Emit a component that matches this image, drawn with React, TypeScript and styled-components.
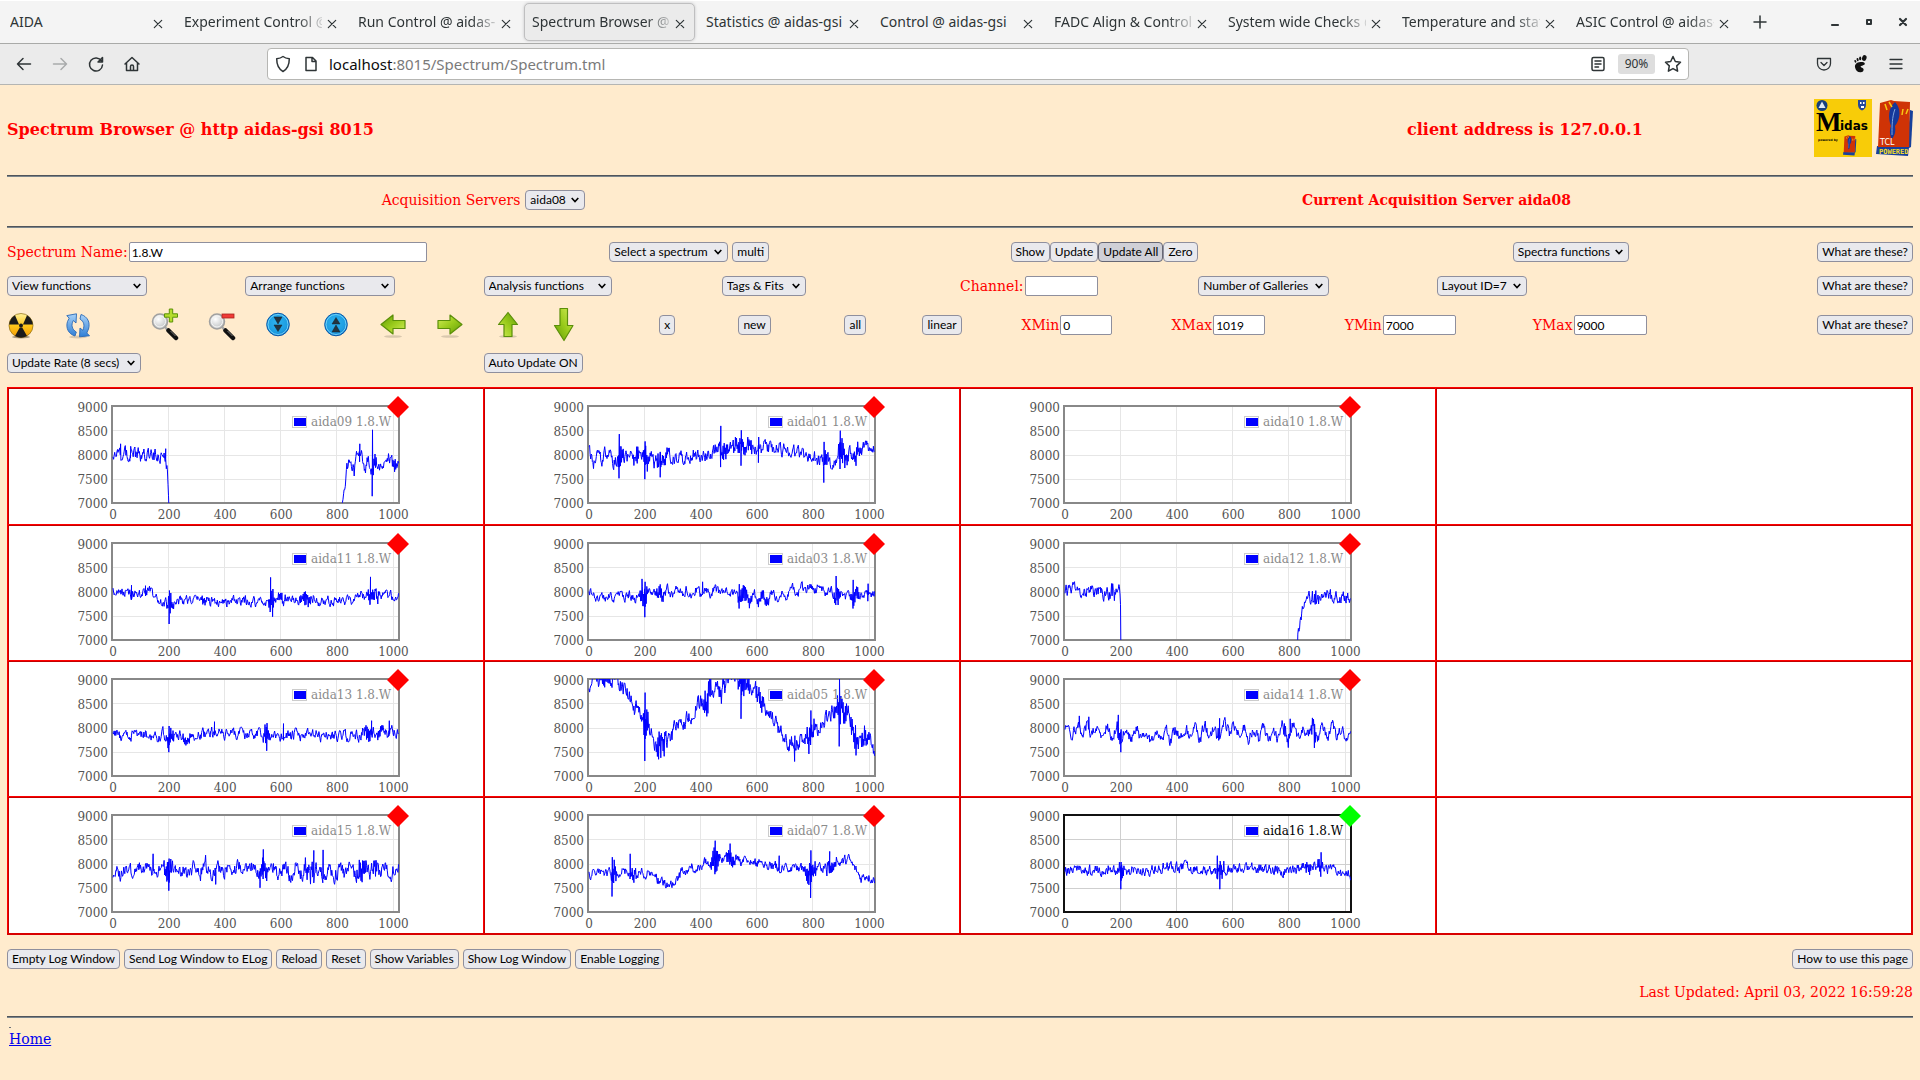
import React from "react";
import styled, { createGlobalStyle } from "styled-components";

const UI_FONT = `"Noto Sans", "Open Sans", sans-serif`;
const CONTROL_FONT = `Lato, "Noto Sans", sans-serif`;
const PAGE_FONT = `"DejaVu Serif", serif`;

const GlobalStyle = createGlobalStyle`
  *, *::before, *::after { box-sizing: border-box; }
  body { margin: 0; background: #ffebcd; }
  #root { min-height: 100vh; }
`;

/* ---------- browser chrome ---------- */

const Chrome = styled.header`
  font-family: ${UI_FONT};
  color: #2e3436;
`;

const TabBar = styled.div`
  display: flex;
  align-items: center;
  gap: 3px;
  height: 44px;
  padding-left: 2px;
  background: #f4f4f4;
  border-top: 1px solid #fff;
  border-bottom: 1px solid #a9aaa8;
`;

const Tab = styled.div<{ $active?: boolean }>`
  display: flex;
  align-items: center;
  flex: 0 1 171px;
  min-width: 0;
  height: 38px;
  padding: 0 8px 0 7px;
  border: 1px solid ${(p) => (p.$active ? "#bfbfc0" : "transparent")};
  border-radius: 5px;
  background: ${(p) => (p.$active ? "#ebebeb" : "transparent")};
  box-shadow: ${(p) => (p.$active ? "0 0 3px #c4c4c6" : "none")};
`;

const TabTitle = styled.button<{ $faded?: boolean }>`
  flex: 1;
  min-width: 0;
  overflow: hidden;
  padding: 0;
  border: 0;
  background: none;
  color: inherit;
  font: 14px/20px ${UI_FONT};
  text-align: left;
  white-space: nowrap;
  mask-image: ${(p) => (p.$faded ? "linear-gradient(to right, #000 82%, transparent 104%)" : "none")};
`;

const IconButton = styled.button<{ $size?: number; $dim?: boolean }>`
  display: grid;
  place-items: center;
  flex: none;
  width: ${(p) => p.$size ?? 36}px;
  height: ${(p) => p.$size ?? 36}px;
  padding: 0;
  border: 0;
  background: none;
  color: inherit;
  opacity: ${(p) => (p.$dim ? 0.35 : 1)};
`;

const ToolButton = styled(IconButton)`
  width: 28px;
  height: 36px;
`;

const NewTab = styled(IconButton)`
  margin-left: 4px;
`;

const WindowControls = styled.div`
  display: flex;
  margin-left: auto;
`;

const ToolBar = styled.div`
  display: flex;
  align-items: center;
  height: 41px;
  background: #ebebeb;
  border-bottom: 1px solid #b4b5b3;
`;

const NavGroup = styled.nav`
  display: flex;
  width: 267px;
  padding-left: 6px;
`;

const AddressBar = styled.div`
  display: flex;
  align-items: center;
  flex: 1;
  height: 32px;
  padding: 0 3px;
  background: #fff;
  border: 1px solid #b6b6b3;
  border-radius: 4px;
`;

const Url = styled.div`
  flex: 1;
  padding-left: 2px;
  color: #7a7a7a;
  font: 15px/20px ${UI_FONT};
  b { color: #0c0c0d; font-weight: 400; }
`;

const ZoomBadge = styled.button`
  width: 37px;
  height: 20px;
  margin: 0 6px;
  padding: 0;
  border: 0;
  border-radius: 3px;
  background: #dedede;
  color: #2e3436;
  font: 12px/20px ${UI_FONT};
`;

const ExtraGroup = styled.div`
  display: flex;
  justify-content: flex-end;
  width: 231px;
  padding-right: 6px;
`;

/* ---------- page ---------- */

const Page = styled.main`
  padding: 0 7px;
  color: #f00;
  font: 14px/18px ${PAGE_FONT};
`;

const Rule = styled.hr`
  height: 2px;
  margin: 0;
  border: 0;
  border-top: 1px solid #50545a;
  border-bottom: 1px solid #7b858c;
`;

const Banner = styled.div`
  display: grid;
  grid-template-columns: 68fr 32fr auto;
  align-items: center;
  height: 90px;
`;

const Title = styled.h3`
  margin: 0;
  font-size: 16px;
  line-height: 22px;
`;

const ClientCell = styled.div`
  text-align: center;
`;

const Logos = styled.div`
  display: flex;
  gap: 4px;
  margin-bottom: 4px;
`;

const Servers = styled.div`
  display: grid;
  grid-template-columns: 1fr 1fr;
  align-items: center;
  justify-items: center;
  height: 49px;
  padding-bottom: 3px;
`;

const Controls = styled.div`
  display: grid;
  padding: 7px 0 8px;
`;

const Row = styled.div<{ $cols: string; $height: number }>`
  display: grid;
  grid-template-columns: ${(p) => p.$cols};
  align-items: center;
  height: ${(p) => p.$height}px;
`;

const Cell = styled.div<{ $end?: boolean; $gap?: number }>`
  display: flex;
  align-items: center;
  justify-content: ${(p) => (p.$end ? "flex-end" : "flex-start")};
  gap: ${(p) => p.$gap ?? 0}px;
  white-space: nowrap;
`;

const PushRight = styled.span`
  display: flex;
  margin-left: auto;
`;

const PushButton = styled.button<{ $active?: boolean }>`
  flex: none;
  height: 20px;
  padding: 0 4px;
  border: 1px solid ${(p) => (p.$active ? "#676774" : "#8f8f9d")};
  border-radius: 4px;
  background: ${(p) => (p.$active ? "#d0d0d7" : "#e9e9ed")};
  color: #000;
  font: 12px/18px ${CONTROL_FONT};
  white-space: nowrap;
`;

const SelectBox = styled.span<{ $width: number }>`
  display: inline-grid;
  align-items: center;
  flex: none;
  width: ${(p) => p.$width}px;
  > * { grid-area: 1 / 1; }
  > svg { justify-self: end; margin-right: 5px; pointer-events: none; }
`;

const SelectField = styled.select`
  appearance: none;
  width: 100%;
  height: 20px;
  padding: 0 4px;
  border: 1px solid #8f8f9d;
  border-radius: 4px;
  background: #e9e9ed;
  color: #000;
  font: 12px/18px ${CONTROL_FONT};
`;

const Label = styled.label`
  font: 14px/18px ${PAGE_FONT};
`;

const TextField = styled.input<{ $width: number }>`
  width: ${(p) => p.$width}px;
  height: 20px;
  padding: 0 2px;
  border: 1px solid #8f8f9d;
  border-radius: 2px;
  background: #fff;
  color: #000;
  font: 12px/18px ${CONTROL_FONT};
`;

const Gallery = styled.section`
  display: grid;
  grid-template-columns: repeat(4, 1fr);
  grid-template-rows: 137px 136px 136px 137px;
  background: #fff;
  border-right: 2px solid #e00000;
  border-bottom: 2px solid #d80000;
`;

const Panel = styled.div`
  overflow: hidden;
  border-top: 1px solid #f00;
  border-left: 1px solid #f00;
  box-shadow: inset 1px 1px 0 #c40000;
`;

const Plot = styled.svg`
  display: block;
  margin: -1px 0 0 -1px;
  font: 12px ${PAGE_FONT};
  fill: #545454;
`;

const LogBar = styled.div`
  display: flex;
  align-items: center;
  gap: 4px;
  padding-top: 14px;
  > :last-child { margin-left: auto; }
`;

const Updated = styled.p`
  margin: 14px 0 15px;
  text-align: right;
`;

const Footer = styled.footer`
  padding: 5px 2px 0;
  a { color: #00e; }
`;

const Dot = styled.span`
  display: block;
  width: 2px;
  height: 1px;
  margin: 4px 0 2px;
  background: #6b7079;
`;

/* ---------- small icons ---------- */

const Line = ({ size = 20, children, w = 1.5 }: { size?: number; w?: number; children: React.ReactNode }) => (
  <svg width={size} height={size} viewBox="0 0 20 20" fill="none" stroke="currentColor" strokeWidth={w} strokeLinecap="round" strokeLinejoin="round" aria-hidden="true">
    {children}
  </svg>
);

const CloseIcon = () => <Line size={20} w={1.2}><path d="M6.3 6.3l7.4 7.4M13.7 6.3l-7.4 7.4" /></Line>;

const FootIcon = () => (
  <svg width="18" height="20" viewBox="0 0 18 20" fill="#111" aria-hidden="true">
    <ellipse cx="13.3" cy="4" rx="2.2" ry="3" transform="rotate(18 13.3 4)" />
    <ellipse cx="9.2" cy="4.4" rx="1.1" ry="1.9" />
    <ellipse cx="6.6" cy="5.6" rx="1" ry="1.6" transform="rotate(-12 6.6 5.6)" />
    <ellipse cx="4.4" cy="7.3" rx=".9" ry="1.4" transform="rotate(-25 4.4 7.3)" />
    <path d="M9.5 8C5.5 8.200 3.600 10.500 4 13.300 4.500 16.800 7.200 18.600 10 18.200c2.500-.4 3.400-2.700 1.900-4-1-.9-2.200-.6-2.300-1.700-.1-1 4.600-1 4.200-3C13.500 8.200 11.500 7.900 9.500 8z" />
  </svg>
);

const Chevron = () => (
  <svg width="10" height="8" viewBox="0 0 10 8" fill="none" stroke="#000" strokeWidth="1.6" aria-hidden="true">
    <path d="M1.700 2L5 5.600 8.300 2" />
  </svg>
);

/* ---------- toolbar pictures ---------- */

const Pic = ({ children }: { children: React.ReactNode }) => (
  <svg width="28" height="36" viewBox="0 0 28 36" aria-hidden="true">{children}</svg>
);

const HiddenSvg = styled.svg`
  position: absolute;
`;

const PicDefs = () => (
  <HiddenSvg width="0" height="0" aria-hidden="true">
    <defs>
      <linearGradient id="green" x1="0" y1="0" x2="1" y2="1">
        <stop offset="0" stopColor="#d4ee5a" /><stop offset=".5" stopColor="#9acb1c" /><stop offset="1" stopColor="#5f9c06" />
      </linearGradient>
      <radialGradient id="blue" cx=".45" cy=".4" r=".65">
        <stop offset="0" stopColor="#2fb2ee" /><stop offset=".7" stopColor="#1c9de2" /><stop offset="1" stopColor="#0b62b8" />
      </radialGradient>
      <linearGradient id="sky" x1="0" y1="0" x2="0" y2="1">
        <stop offset="0" stopColor="#a9d2f8" /><stop offset="1" stopColor="#2f7fd6" />
      </linearGradient>
      <linearGradient id="amber" x1="0" y1="0" x2="0" y2="1">
        <stop offset="0" stopColor="#fff09a" /><stop offset=".5" stopColor="#ffc61a" /><stop offset="1" stopColor="#f29a05" />
      </linearGradient>
      <radialGradient id="glass" cx=".4" cy=".35" r=".7">
        <stop offset="0" stopColor="#fff" /><stop offset="1" stopColor="#b9bcbe" />
      </radialGradient>
    </defs>
  </HiddenSvg>
);

const NukePic = () => (
  <Pic>
    <ellipse cx="14" cy="30" rx="9" ry="1.500" fill="#000" opacity=".35" />
    <circle cx="14" cy="18.500" r="12" fill="url(#amber)" stroke="#8a6a10" strokeWidth=".7" />
    <g fill="#1b1b1b">
      <path d="M12 17.500L2.200 17.500A12 12 0 0 1 8 8.200z" />
      <path d="M16 17.500L25.800 17.500A12 12 0 0 0 20 8.200z" />
      <path d="M12.800 20.600L8 28.900A12 12 0 0 0 20 28.900L15.200 20.600z" />
      <circle cx="14" cy="18.500" r="2" />
    </g>
  </Pic>
);

const RefreshPic = () => (
  <Pic>
    <ellipse cx="14" cy="30" rx="9" ry="1.500" fill="#000" opacity=".15" />
    <g fill="url(#sky)" stroke="#2a69b5" strokeWidth=".9" strokeLinejoin="round">
      <path d="M11 29C4.500 27 1.500 21 3.500 14.500L5.200 11.200 2.800 8.600 12.500 6.800 12 16 9.300 13.500C6.800 18 8 22.500 12.300 25z" />
      <path d="M17 7.500C23.500 9.500 26.500 15.500 24.500 22L22.800 26 25.500 28.800 15.500 29.800 16 21 18.800 23.300C21 18.500 20 14.500 16 12z" />
    </g>
  </Pic>
);

const ZoomPic = ({ plus }: { plus?: boolean }) => (
  <Pic>
    <path d="M14 20l4.500 5" stroke="#aaa" strokeWidth="2.500" />
    <path d="M17.500 23.500L25 31" stroke="#111" strokeWidth="4.500" strokeLinecap="round" />
    <path d="M19.500 24l5 5" stroke="#777" strokeWidth="1" />
    <circle cx="9" cy="14.500" r="7.500" fill="url(#glass)" stroke="#a0a0a0" strokeWidth="1.500" />
    <circle cx="9" cy="14.500" r="5.500" fill="none" stroke="#f5f5f5" strokeWidth="1" />
    {plus
      ? <path d="M18.300 2h3.400v4.800h4.800v3.400h-4.800V15h-3.400v-4.800h-4.800V6.800h4.800z" fill="#b5dc2c" stroke="#5c9208" strokeWidth="1" />
      : <rect x="14" y="7" width="12" height="4" fill="#f03a35" stroke="#a8231f" strokeWidth=".8" />}
  </Pic>
);

const BallPic = ({ up }: { up?: boolean }) => (
  <Pic>
    <circle cx="14" cy="17.500" r="11.300" fill="url(#blue)" stroke="#0a58a8" strokeWidth="1" />
    <circle cx="14" cy="17.500" r="10" fill="none" stroke="#6fd0f8" strokeWidth="1" />
    <path d={up ? "M14 10.500l4 6.500h-8zM14 18l4 7h-8z" : "M14 24.500l4-6.500h-8zM14 17l4-7h-8z"} fill="#24343f" stroke="#123" strokeWidth=".5" />
  </Pic>
);

const ArrowPic = ({ turn, thin }: { turn: number; thin?: boolean }) => (
  <Pic>
    <ellipse cx="14" cy="29.500" rx="9" ry="1.300" fill="#000" opacity={thin ? 0 : 0.15} />
    <path
      d={thin ? "M-2 14h17V8.500L30 17.500 15 27v-5.500H-2z" : "M2 13.500h12V8L26 17.500 14 27v-5.500H2z"}
      transform={`rotate(${turn} 14 17.500)`}
      fill="url(#green)" stroke="#5b8f0a" strokeWidth="1.200" strokeLinejoin="round"
    />
  </Pic>
);

/* ---------- logos ---------- */

const TclMark = () => (
  <>
    <path d="M34 11l3 1-2 36-4 2z" fill="#17409c" />
    <path d="M1 47l32 1-1 9-32-2z" fill="#17409c" />
    <path d="M4 4L15 1 18 2 34 3 33 48 2 48z" fill="#cf3306" />
    <path d="M19 3C12 9 12 19 15 27c-2 5-1 10 1 13 3-4 4-8 3-13 6-8 6-18 0-24z" fill="#14389b" />
    <path d="M19 10c-3 8-3 17-3 26" stroke="#7fa5dd" strokeWidth="1" fill="none" />
    <path d="M9 5l2 6M13 3l3 5M27 10l-1 6M32 10l-2 5" stroke="#f8c813" strokeWidth="1.500" />
  </>
);

const MidasLogo = () => (
  <svg width="58" height="58" viewBox="0 0 58 58" role="img" aria-label="Midas">
    <rect width="58" height="58" fill="#f8cc08" />
    <circle cx="8" cy="6.500" r="5.500" fill="#163f7d" />
    <path d="M8 2.500l3.500 6.500h-7z" fill="#dfe8f2" />
    <path d="M44 1h8v5c0 3-2 4.500-4 5.500-2-1-4-2.500-4-5.500z" fill="#24479b" />
    <path d="M46 3h1.500v2H46zM49 3h1.500v2H49zM47 7h3v2h-3z" fill="#fff" />
    <text x="2" y="32" fontFamily="Liberation Serif, serif" fontWeight="700" fontSize="27" fill="#000">M</text>
    <text x="26" y="31" fontFamily="DejaVu Sans, sans-serif" fontWeight="700" fontSize="12" fill="#000">idas</text>
    <text x="4" y="42" fontFamily="DejaVu Sans, sans-serif" fontWeight="700" fontSize="3" fill="#000">powered by</text>
    <g transform="translate(29 36) scale(.36)"><TclMark /></g>
  </svg>
);

const TclLogo = () => (
  <svg width="37" height="58" viewBox="0 0 37 58" role="img" aria-label="TCL powered">
    <TclMark />
    <text x="4" y="46" fontFamily="DejaVu Sans, sans-serif" fontSize="8" fill="#fff">TCL</text>
    <text x="3" y="55" fontFamily="DejaVu Sans Mono, monospace" fontWeight="700" fontSize="7" fill="#f2dc2a">POWERED</text>
  </svg>
);

/* ---------- spectra ---------- */

type Pt = [number, number];

interface Spectrum {
  name: string;
  base?: Pt[];          // mean level along the channel axis
  noise?: number;       // random amplitude
  wave?: Pt;            // amplitude, period
  bursts?: [number, number, number][]; // centre, half width, amplitude
  spikes?: [number, number, number][]; // channel, high, low
  active?: boolean;
}

const SPECTRA: (Spectrum | null)[] = [
  {
    name: "aida09", noise: 105,
    base: [[0, 8000], [30, 8020], [100, 7970], [185, 7970], [193, 7700], [197, 7400], [200, 6700], [201, 5000], [812, 5000], [815, 7000], [826, 7180], [832, 7650], [845, 7850], [860, 7650], [868, 7950], [885, 7980], [895, 7700], [910, 7880], [960, 7750], [985, 7980], [1000, 7700], [1019, 7900]],
    bursts: [[930, 12, 220], [1003, 8, 220]],
    spikes: [[26, 8220, 8030], [62, 8170, 7930], [187, 8120, 7900], [879, 8220, 7850], [924, 8510, 7140]],
  },
  {
    name: "aida01", noise: 105,
    base: [[0, 8050], [15, 7780], [35, 8200], [45, 7850], [65, 8080], [85, 7850], [110, 7950], [200, 7930], [260, 7870], [340, 7930], [440, 8060], [520, 8160], [600, 8100], [700, 8120], [760, 8020], [800, 7930], [850, 7850], [920, 8000], [1019, 8200]],
    bursts: [[112, 14, 280], [170, 14, 170], [203, 14, 260], [260, 30, 160], [480, 24, 150], [545, 40, 170], [838, 12, 290], [905, 18, 270], [950, 18, 150]],
    spikes: [[107, 8420, 7510], [199, 8270, 7490], [254, 8040, 7530], [469, 8590, 7740], [542, 8500, 7770], [604, 8360, 7830], [837, 8260, 7420], [895, 8490, 7700]],
  },
  { name: "aida10" },
  null,
  {
    name: "aida11", noise: 75,
    base: [[0, 8000], [60, 7960], [130, 8010], [170, 7760], [205, 7760], [260, 7840], [340, 7800], [500, 7790], [640, 7820], [720, 7800], [830, 7800], [880, 7920], [940, 7930], [1019, 7870]],
    bursts: [[205, 14, 210], [320, 14, 100], [566, 15, 230], [600, 20, 110], [690, 26, 140], [920, 16, 170], [950, 16, 110]],
    spikes: [[65, 8130, 7830], [115, 8120, 7970], [200, 8020, 7330], [561, 8290, 7610], [569, 7960, 7480], [917, 8300, 7740]],
  },
  {
    name: "aida03", noise: 70, wave: [55, 34],
    base: [[0, 7990], [30, 7880], [70, 7870], [180, 7900], [220, 7960], [340, 8000], [500, 7990], [560, 7890], [620, 7830], [700, 7980], [790, 8080], [840, 8070], [880, 7920], [940, 7880], [1019, 7980]],
    bursts: [[195, 15, 290], [255, 22, 140], [555, 26, 190], [620, 34, 90], [885, 14, 210], [945, 20, 190]],
    spikes: [[188, 8260, 7830], [199, 8200, 7470], [404, 8200, 7930], [535, 8150, 7650], [880, 8320, 7760], [941, 8240, 7650], [994, 8160, 7800]],
  },
  {
    name: "aida12", noise: 100,
    base: [[0, 8040], [90, 8000], [140, 7960], [195, 8030], [199, 7500], [201, 5000], [822, 5000], [830, 7000], [842, 7500], [862, 7850], [920, 7900], [1019, 7870]],
    bursts: [[170, 14, 120], [890, 15, 130]],
  },
  null,
  {
    name: "aida13", noise: 80, wave: [30, 34],
    base: [[0, 7900], [20, 7810], [120, 7870], [250, 7800], [380, 7900], [560, 7840], [840, 7830], [920, 7880], [1019, 7910]],
    bursts: [[204, 16, 200], [265, 20, 90], [548, 14, 200], [905, 16, 190], [950, 14, 110]],
    spikes: [[199, 8030, 7490], [361, 8120, 7850], [548, 8090, 7520], [607, 8080, 7840], [921, 8140, 7850], [984, 8140, 7830]],
  },
  {
    name: "aida05", noise: 135,
    base: [[0, 8920], [30, 9000], [110, 8950], [150, 8550], [190, 8130], [220, 7900], [245, 7650], [290, 7830], [340, 8120], [400, 8500], [440, 8750], [500, 9020], [570, 8980], [600, 8750], [640, 8250], [680, 7950], [710, 7720], [770, 7720], [820, 8050], [870, 8350], [920, 8450], [935, 7950], [960, 7730], [1000, 7800], [1019, 7550]],
    bursts: [[60, 16, 260], [203, 12, 380], [255, 20, 270], [425, 14, 330], [470, 20, 180], [545, 28, 350], [608, 14, 280], [790, 16, 280], [895, 26, 320], [948, 16, 330], [978, 12, 200]],
    spikes: [[199, 8720, 7310], [542, 9000, 8180], [733, 7830, 7300], [790, 8350, 7640], [892, 9000, 7610]],
  },
  {
    name: "aida14", noise: 90, wave: [105, 35],
    base: [[0, 7900], [100, 7960], [200, 7900], [300, 7860], [540, 7900], [570, 8000], [650, 7880], [720, 7840], [800, 7900], [880, 7960], [1019, 7870]],
    bursts: [[192, 9, 170], [545, 14, 110], [790, 20, 110], [890, 22, 160]],
    spikes: [[50, 8240, 8000], [84, 8220, 8000], [189, 8260, 7780], [199, 7960, 7490], [550, 8190, 7860], [802, 8180, 7830], [889, 8020, 7580]],
  },
  null,
  {
    name: "aida15", noise: 110, wave: [70, 40],
    base: [[0, 7830], [200, 7880], [260, 7830], [360, 7890], [540, 7870], [680, 7840], [860, 7830], [1019, 7900]],
    bursts: [[195, 14, 260], [320, 12, 130], [535, 16, 240], [700, 22, 170], [885, 18, 230], [935, 8, 160]],
    spikes: [[142, 8200, 7980], [199, 8100, 7440], [366, 7900, 7570], [535, 8290, 7680], [524, 7900, 7500], [715, 8270, 7800], [748, 8280, 7850]],
  },
  {
    name: "aida07", noise: 75,
    base: [[0, 7790], [130, 7830], [220, 7780], [270, 7560], [295, 7590], [340, 7850], [420, 8020], [480, 8120], [540, 8060], [640, 7950], [760, 7880], [800, 7890], [860, 7920], [925, 8090], [970, 7700], [990, 7770], [1019, 7650]],
    bursts: [[90, 12, 290], [155, 16, 160], [450, 18, 290], [505, 16, 180], [790, 24, 250], [865, 18, 190]],
    spikes: [[82, 8130, 7320], [146, 8200, 7680], [449, 8470, 7780], [502, 8410, 7980], [677, 8160, 7890], [790, 8270, 7290], [857, 8250, 7800]],
  },
  {
    name: "aida16", noise: 80,
    base: [[0, 7860], [200, 7860], [280, 7850], [350, 7930], [430, 7940], [500, 7820], [560, 7840], [620, 7930], [700, 7900], [780, 7820], [860, 7940], [920, 7890], [1019, 7760]],
    bursts: [[200, 12, 200], [150, 16, 60], [555, 14, 190], [910, 14, 170], [870, 14, 110]],
    spikes: [[199, 8030, 7470], [542, 8160, 7690], [552, 8050, 7470], [912, 8230, 7760]],
    active: true,
  },
  null,
];

const level = (pts: Pt[], x: number) => {
  for (let i = 1; i < pts.length; i++) {
    if (x <= pts[i][0]) {
      const [x0, y0] = pts[i - 1];
      const [x1, y1] = pts[i];
      return y0 + ((y1 - y0) * (x - x0)) / (x1 - x0);
    }
  }
  return pts[pts.length - 1][1];
};

const CHANNEL = 0.2805;
const COUNT = 0.0485;

const tracePath = (s: Spectrum) => {
  if (!s.base) return "";
  let seed = Number(s.name.slice(4)) * 7919 + 13;
  const random = () => {
    seed = (seed * 1103515245 + 12345) % 2147483648;
    return (seed / 2147483648) * 2 - 1;
  };
  const out: Pt[] = [];
  let drift = 0;
  for (let x = 0; x <= 1019; x += 2) {
    drift = drift * 0.5 + random();
    let y = level(s.base, x) + drift * (s.noise ?? 0) * 1.2;
    if (s.wave) y += Math.sin((x / s.wave[1]) * Math.PI * 2) * s.wave[0];
    for (const [c, half, amp] of s.bursts ?? []) {
      const d = Math.abs(x - c) / half;
      if (d < 1) y += (x % 4 ? 1 : -1) * amp * (1 - d * 0.6) * (0.4 + Math.abs(random()) * 0.5);
    }
    out.push([x, y]);
    for (const [c, hi, lo] of s.spikes ?? []) {
      if (c >= x && c < x + 2) out.push([c, lo], [c + 1, hi]);
    }
  }
  return "M" + out.map(([x, y]) => `${(x * CHANNEL + 1).toFixed(1)} ${(97 - (y - 7000) * COUNT).toFixed(1)}`).join("L");
};

const X_TICKS = [0, 200, 400, 600, 800, 1000];
const Y_TICKS = [9000, 8500, 8000, 7500, 7000];

const SpectrumPlot = ({ s }: { s: Spectrum }) => {
  const frame = s.active ? "#111" : "#888";
  const grid = s.active ? "#cfcfcf" : "#e6e6e6";
  return (
    <Plot width="476" height="136" viewBox="0 0 476 136" role="img" aria-label={`${s.name} 1.8.W`}>
      {X_TICKS.slice(1).map((t) => (
        <rect key={t} x={Math.round(105 + t * CHANNEL)} y="19" width="1" height="97" fill={grid} />
      ))}
      {Y_TICKS.slice(1, 4).map((t) => (
        <rect key={t} x="105" y={Math.round(116 - (t - 7000) * COUNT)} width="287" height="1" fill={grid} />
      ))}
      <rect x="105" y="19" width="287" height="97" fill="none" stroke={frame} strokeWidth="2" />
      <svg x="105" y="19" width="287" height="97">
        <path d={tracePath(s)} fill="none" stroke="#00f" strokeWidth="1" strokeLinejoin="round" />
      </svg>
      {Y_TICKS.map((t) => (
        <text key={t} x="101" y={Math.round(121 - (t - 7000) * 0.048)} textAnchor="end">{t}</text>
      ))}
      {X_TICKS.map((t) => (
        <text key={t} x={106 + t * CHANNEL} y="132" textAnchor="middle">{t}</text>
      ))}
      <rect x="285.500" y="29.500" width="14" height="11" fill="#fff" stroke="#ccc" />
      <rect x="287" y="31" width="12" height="8" fill="#00f" />
      <text x="304" y="39" fill={s.active ? "#000" : "#8b8b8b"}>{s.name} 1.8.W</text>
      <path d="M391 9l11 11-11 11-11-11z" fill={s.active ? "#0f0" : "#f00"} />
    </Plot>
  );
};

/* ---------- composed controls ---------- */

const Select = ({ text, width, name }: { text: string; width: number; name?: string }) => (
  <SelectBox $width={width}>
    <SelectField id={name} aria-label={name ? undefined : text}><option>{text}</option></SelectField>
    <Chevron />
  </SelectBox>
);

const Field = ({ label, value, width }: { label: string; value: string; width: number }) => (
  <Cell $gap={1}>
    <Label htmlFor={label}>{label}</Label>
    <TextField id={label} defaultValue={value} $width={width} />
  </Cell>
);

const Help = () => <Cell $end><PushButton>What are these?</PushButton></Cell>;

const fr = (...n: number[]) => n.map((v) => `minmax(0, ${v}fr)`).join(" ");

const TABS: [string, boolean][] = [
  ["AIDA", false],
  ["Experiment Control @ aidas-gsi", true],
  ["Run Control @ aidas-gsi", true],
  ["Spectrum Browser @ aidas-gsi", true],
  ["Statistics @ aidas-gsi", false],
  ["Control @ aidas-gsi", false],
  ["FADC Align & Control @ aidas-gsi", true],
  ["System wide Checks @ aidas-gsi", true],
  ["Temperature and status scan", true],
  ["ASIC Control @ aidas-gsi", true],
];

const TOOLS: [string, React.ReactNode][] = [
  ["Zero", <NukePic />],
  ["Refresh", <RefreshPic />],
  ["Zoom in", <ZoomPic plus />],
  ["Zoom out", <ZoomPic />],
  ["Compress", <BallPic />],
  ["Expand", <BallPic up />],
  ["Left", <ArrowPic turn={180} />],
  ["Right", <ArrowPic turn={0} />],
  ["Up", <ArrowPic turn={270} />],
  ["Down", <ArrowPic turn={90} thin />],
];

export default function App() {
  return (
    <>
      <GlobalStyle />
      <PicDefs />
      <Chrome>
        <TabBar>
          {TABS.map(([title, faded], i) => (
            <Tab key={title} $active={i === 3}>
              <TabTitle $faded={faded}>{title}</TabTitle>
              <IconButton $size={16} aria-label="Close tab"><CloseIcon /></IconButton>
            </Tab>
          ))}
          <NewTab $size={28} aria-label="New tab"><Line><path d="M4 10h12M10 4v12" /></Line></NewTab>
          <WindowControls>
            <IconButton $size={34} aria-label="Minimize"><Line w={2.200}><path d="M7 13h6" /></Line></IconButton>
            <IconButton $size={34} aria-label="Maximize"><Line w={2}><path d="M8 8h4v4H8z" /></Line></IconButton>
            <IconButton $size={34} aria-label="Close window"><Line w={2.200}><path d="M7 7l6 6M13 7l-6 6" /></Line></IconButton>
          </WindowControls>
        </TabBar>
        <ToolBar>
          <NavGroup>
            <IconButton aria-label="Back"><Line><path d="M16.500 10H3.500M9 4.500L3.500 10 9 15.500" /></Line></IconButton>
            <IconButton $dim aria-label="Forward"><Line><path d="M3.500 10h13M11 4.500l5.500 5.500-5.500 5.500" /></Line></IconButton>
            <IconButton aria-label="Reload"><Line><path d="M15.500 7A6.500 6.500 0 1 0 16.500 11M16.500 3.500V8H12z" /></Line></IconButton>
            <IconButton aria-label="Home"><Line><path d="M3 10l7-6.500 7 6.500M4.500 9v7.500h11V9M8.500 16.500V12.500a1.500 1.500 0 0 1 3 0v4" /></Line></IconButton>
          </NavGroup>
          <AddressBar>
            <IconButton $size={24} aria-label="Protection"><Line><path d="M10 2.500c2 1.500 4 2 6.300 2.300 0 6-1.300 10-6.300 12.700C5 14.800 3.700 10.800 3.700 4.800 6 4.500 8 4 10 2.500z" /></Line></IconButton>
            <IconButton $size={32} aria-label="Site information"><Line><path d="M5 3.500h6.500L15 7v9.500H5zM11 3.500V7.500h4" /></Line></IconButton>
            <Url aria-label="Address"><b>localhost</b>:8015/Spectrum/Spectrum.tml</Url>
            <IconButton $size={28} aria-label="Reader view"><Line><rect x="4" y="3.500" width="12" height="13" rx="1.500" /><path d="M7 7h6M7 10h6M7 13h3.500" /></Line></IconButton>
            <ZoomBadge>90%</ZoomBadge>
            <IconButton $size={24} aria-label="Bookmark"><Line><path d="M10 2.500l2.300 5 5.200.7-3.800 3.700.9 5.300-4.600-2.600-4.600 2.600.9-5.300L2.500 8.200l5.200-.7z" /></Line></IconButton>
          </AddressBar>
          <ExtraGroup>
            <IconButton aria-label="Pocket"><Line w={1.300}><path d="M3.500 4.500h13v5a6.500 6.500 0 0 1-13 0zM7 8.500l3 3 3-3" /></Line></IconButton>
            <IconButton aria-label="GNOME extensions"><FootIcon /></IconButton>
            <IconButton aria-label="Menu"><Line w={1.300}><path d="M4 5.500h12M4 10h12M4 14.500h12" /></Line></IconButton>
          </ExtraGroup>
        </ToolBar>
      </Chrome>

      <Page>
        <Banner>
          <Title>Spectrum Browser @ http aidas-gsi 8015</Title>
          <ClientCell><Title>client address is 127.0.0.1</Title></ClientCell>
          <Logos><MidasLogo /><TclLogo /></Logos>
        </Banner>
        <Rule />
        <Servers>
          <Cell $gap={5}>
            <Label htmlFor="server">Acquisition Servers</Label>
            <Select text="aida08" width={60} name="server" />
          </Cell>
          <strong>Current Acquisition Server aida08</strong>
        </Servers>
        <Rule />

        <Controls>
          <Row $height={34} $cols={fr(602, 401, 502, 306, 94)}>
            <Field label="Spectrum Name:" value="1.8.W" width={298} />
            <Cell $gap={4}><Select text="Select a spectrum" width={119} /><PushButton>multi</PushButton></Cell>
            <Cell>
              <PushButton>Show</PushButton>
              <PushButton>Update</PushButton>
              <PushButton $active>Update All</PushButton>
              <PushButton>Zero</PushButton>
            </Cell>
            <Select text="Spectra functions" width={116} />
            <Help />
          </Row>
          <Row $height={34} $cols={fr(1, 1, 1, 1, 1, 1, 1, 1)}>
            <Select text="View functions" width={140} />
            <Select text="Arrange functions" width={150} />
            <Select text="Analysis functions" width={128} />
            <Select text="Tags & Fits" width={84} />
            <Field label="Channel:" value="" width={73} />
            <Select text="Number of Galleries" width={131} />
            <Select text="Layout ID=7" width={90} />
            <Help />
          </Row>
          <Row $height={44} $cols={fr(57, 87, 57, 56, 58, 57, 57, 58, 56, 109, 79, 106, 78, 99, 150, 173, 188, 380)}>
            {TOOLS.map(([name, pic]) => (
              <ToolButton key={name} aria-label={name}>{pic}</ToolButton>
            ))}
            <Cell><PushButton>x</PushButton></Cell>
            <Cell><PushButton>new</PushButton></Cell>
            <Cell><PushButton>all</PushButton></Cell>
            <Cell><PushButton>linear</PushButton></Cell>
            <Field label="XMin" value="0" width={52} />
            <Field label="XMax" value="1019" width={52} />
            <Field label="YMin" value="7000" width={73} />
            <Cell $gap={1}>
              <Label htmlFor="YMax">YMax</Label>
              <TextField id="YMax" defaultValue="9000" $width={73} />
              <PushRight><PushButton>What are these?</PushButton></PushRight>
            </Cell>
          </Row>
          <Row $height={32} $cols={fr(1, 1, 1, 1)}>
            <Select text="Update Rate (8 secs)" width={134} />
            <Cell><PushButton>Auto Update ON</PushButton></Cell>
          </Row>
        </Controls>

        <Gallery>
          {SPECTRA.map((s, i) => (
            <Panel key={i}>{s && <SpectrumPlot s={s} />}</Panel>
          ))}
        </Gallery>

        <LogBar>
          <PushButton>Empty Log Window</PushButton>
          <PushButton>Send Log Window to ELog</PushButton>
          <PushButton>Reload</PushButton>
          <PushButton>Reset</PushButton>
          <PushButton>Show Variables</PushButton>
          <PushButton>Show Log Window</PushButton>
          <PushButton>Enable Logging</PushButton>
          <PushButton>How to use this page</PushButton>
        </LogBar>
        <Updated>Last Updated: April 03, 2022 16:59:28</Updated>
        <Rule />
        <Footer>
          <Dot />
          <a href="#home">Home</a>
        </Footer>
      </Page>
    </>
  );
}
